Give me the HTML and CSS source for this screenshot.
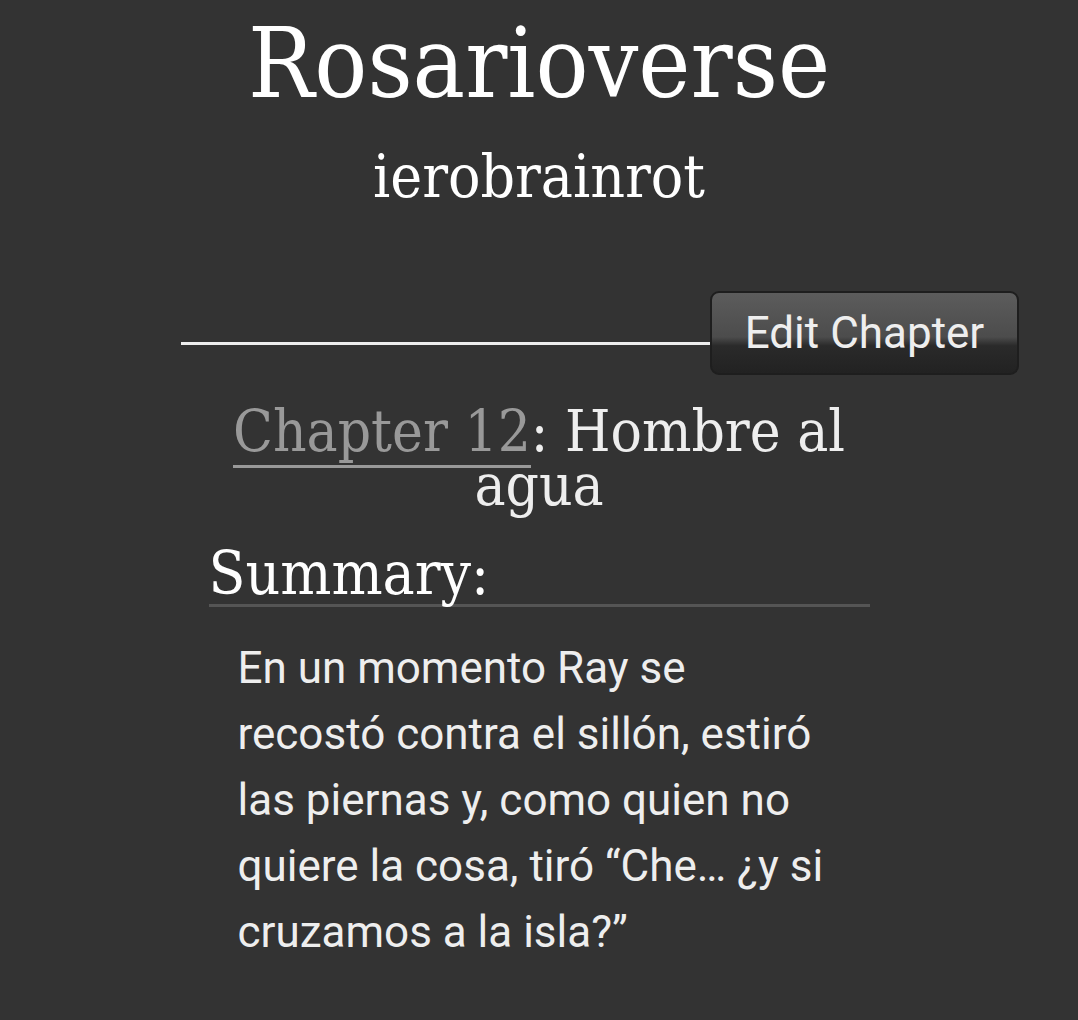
FILE: index.html
```html
<!DOCTYPE html>
<html lang="es">
<head>
<meta charset="utf-8">
<title>Rosarioverse</title>
<link rel="stylesheet" href="styles.css">
</head>
<body>
<div class="page">
  <header class="work-head">
    <h1 class="work-title">Rosarioverse</h1>
    <h2 class="work-author">ierobrainrot</h2>
  </header>
  <div class="actions-row">
    <div class="rule"></div>
    <a class="btn" href="#">Edit Chapter</a>
  </div>
  <div class="chapter">
    <h3 class="chapter-title"><a class="chapter-link" href="#">Chapter 12</a>: Hombre al agua</h3>
    <div class="summary">
      <h3 class="summary-head">Summary:</h3>
      <p class="summary-text">En un momento Ray se recostó contra el sillón, estiró las piernas y, como quien no quiere la cosa, tiró “Che… ¿y si cruzamos a la isla?”</p>
    </div>
  </div>
</div>
</body>
</html>
```

FILE: styles.css
```css
html, body {
  margin: 0;
  padding: 0;
  background: #333333;
}
.page {
  width: 1078px;
  min-height: 1020px;
  color: #eeeeee;
}
.work-head {
  text-align: center;
  padding-top: 8px;
}
.work-title {
  margin: 0;
  font-family: "DejaVu Serif Condensed", "DejaVu Serif", serif;
  font-stretch: condensed;
  font-weight: normal;
  font-size: 98px;
  line-height: 110px;
  color: #ffffff;
}
.work-author {
  margin: 0;
  margin-top: 23px;
  font-family: "DejaVu Serif Condensed", "DejaVu Serif", serif;
  font-stretch: condensed;
  font-weight: normal;
  font-size: 60px;
  line-height: 70px;
  color: #ffffff;
}
.actions-row {
  display: flex;
  align-items: center;
  margin-top: 80px;
  padding-left: 181px;
  padding-right: 59px;
}
.rule {
  flex: 1;
  height: 3px;
  background: #eeeeee;
  margin-top: 20px;
}
.btn {
  display: block;
  box-sizing: border-box;
  width: 309px;
  height: 84px;
  line-height: 80px;
  text-align: center;
  font-family: Roboto, "Liberation Sans", sans-serif;
  font-size: 44px;
  color: #eeeeee;
  text-decoration: none;
  border: 2px solid #1e1e1e;
  border-radius: 9px;
  background: linear-gradient(to bottom, #5c5c5c 0%, #4c4c4c 55%, #2a2a2a 66%, #222222 100%);
}
.chapter {
  width: 661px;
  margin: 29px auto 0;
}
.chapter-title {
  margin: 0;
  text-align: center;
  font-family: "DejaVu Serif Condensed", "DejaVu Serif", serif;
  font-stretch: condensed;
  font-weight: normal;
  font-size: 58px;
  line-height: 54px;
  color: #eeeeee;
}
.chapter-link {
  color: #999999;
  text-decoration: none;
  border-bottom: 3px solid #999999;
}
.summary {
  margin-top: 30px;
}
.summary-head {
  margin: 0;
  font-family: "DejaVu Serif Condensed", "DejaVu Serif", serif;
  font-stretch: condensed;
  font-weight: normal;
  font-size: 60px;
  line-height: 62px;
  color: #ffffff;
  border-bottom: 3px solid #555555;
}
.summary-text {
  margin: 28px 40px 0 29px;
  font-family: Roboto, "Liberation Sans", sans-serif;
  font-size: 44px;
  line-height: 66px;
  color: #eeeeee;
}
```
